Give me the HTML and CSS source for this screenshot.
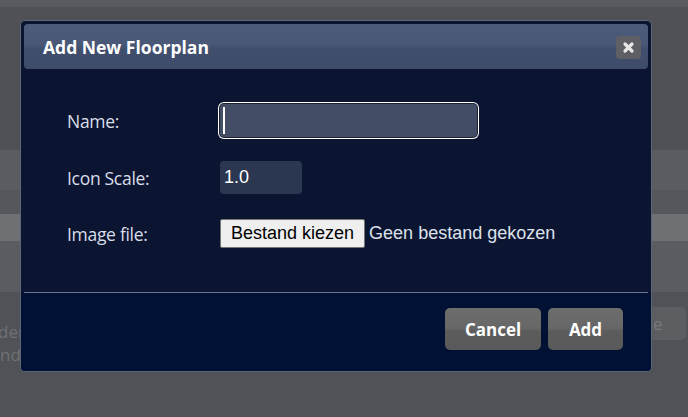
FILE: index.html
```html
<!DOCTYPE html>
<html>
<head>
<meta charset="utf-8">
<link rel="stylesheet" href="styles.css">
</head>
<body>
<div class="page">
  <div class="topbar"></div>
  <div class="band b1"></div>
  <div class="band b2"></div>
  <div class="band b3"></div>
  <div class="band b4"></div>
  <div class="band b5"></div>
  <div class="band b6"></div>
  <div class="bgfoot">
    <div class="bgtext"><span>den</span><span>nd</span></div>
    <div class="bgbtn">e</div>
  </div>
</div>

<div class="dialog">
  <div class="titlebar">
    <span class="title">Add New Floorplan</span>
    <button class="close" type="button">
      <svg width="13" height="13" viewBox="0 0 13 13"><path d="M3 3L10 10M10 3L3 10" stroke="#e6e6e6" stroke-width="3.2" stroke-linecap="round"/></svg>
    </button>
  </div>
  <div class="content">
    <label class="lbl">Name:</label>
    <div class="namefield">
      <input class="inp name" type="text">
      <span class="caret"></span>
    </div>
    <label class="lbl">Icon Scale:</label>
    <div><input class="inp scale" type="text" value="1.0"></div>
    <label class="lbl">Image file:</label>
    <div class="filefield">
      <span class="filebtn">Bestand kiezen</span>
      <span class="filename">Geen bestand gekozen</span>
    </div>
  </div>
  <div class="sep"></div>
  <div class="footer">
    <button class="btn" type="button">Cancel</button>
    <button class="btn" type="button">Add</button>
  </div>
</div>
</body>
</html>
```

FILE: styles.css
```css
html, body {
  margin: 0;
  padding: 0;
  background: #4f5156;
  overflow: hidden;
}
.page {
  width: 688px;
  height: 417px;
  display: flex;
  flex-direction: column;
  background: #4f5156;
}
.topbar { height: 7px; background: #595b60; }
.band { flex: none; }
.b1 { height: 143px; background: #4f5156; }
.b2 { height: 40px; background: #5a5c61; }
.b3 { height: 24px; background: #55575c; }
.b4 { height: 27px; background: #6e7073; }
.b5 { height: 51px; background: #5a5c61; }
.b6 { height: 20px; background: #505257; }
.bgfoot {
  display: flex;
  justify-content: space-between;
  align-items: flex-start;
  background: #505257;
  flex: 1;
}
.bgtext {
  display: flex;
  flex-direction: column;
  margin-top: 8px;
  font-family: "Open Sans", sans-serif;
  font-size: 17px;
  line-height: 23px;
  color: #6f7175;
  width: 20px;
  overflow: hidden;
}
.bgtext span:first-child { margin-left: -2px; }
.bgbtn {
  margin-top: -5px;
  margin-right: 2px;
  width: 56px;
  height: 33px;
  border-radius: 5px;
  background: #5b5d61;
  color: #76787b;
  font-family: "Open Sans", sans-serif;
  font-size: 17px;
  line-height: 33px;
  padding-left: 23px;
  box-sizing: border-box;
}

.dialog {
  position: absolute;
  left: 20px;
  top: 20px;
  width: 632px;
  height: 352px;
  box-sizing: border-box;
  border: 1px solid #5e6679;
  border-radius: 5px;
  background: #0b1532;
  display: flex;
  flex-direction: column;
  overflow: hidden;
  font-family: "Open Sans", sans-serif;
}
.titlebar {
  margin: 3px 3px 0;
  height: 45px;
  border-radius: 4px;
  background: linear-gradient(180deg, #4d5b7b 0%, #4a5878 45%, #414f6e 55%, #3e4b69 100%);
  display: flex;
  align-items: center;
  justify-content: space-between;
  padding: 0 7px 0 19px;
  box-sizing: border-box;
}
.title {
  color: #ffffff;
  font-weight: 700;
  font-size: 17.5px;
}
.close {
  width: 25px;
  height: 23px;
  border: none;
  border-radius: 4px;
  background: #5e5f64;
  padding: 0;
  display: flex;
  align-items: center;
  justify-content: center;
  margin-top: 2px;
}
.content {
  display: grid;
  grid-template-columns: 153px auto;
  grid-template-rows: 33px 33px 31px;
  row-gap: 24px;
  align-items: center;
  padding: 35px 0 0 46px;
  height: 223px;
  box-sizing: border-box;
}
.lbl {
  color: #d9dee8;
  font-size: 17.5px;
  letter-spacing: -0.3px;
}
.inp {
  display: block;
  box-sizing: border-box;
  height: 33px;
  border: none;
  border-radius: 4px;
  color: #ffffff;
  font-family: "Liberation Sans", Arial, sans-serif;
  font-size: 18px;
  padding: 0 4px;
  outline: none;
}
.namefield {
  position: relative;
  width: 257px;
}
.name {
  width: 257px;
  background: #434e66;
  box-shadow: 0 0 0 1px #1c2130, 0 0 0 2px #ffffff;
}
.caret {
  position: absolute;
  left: 3px;
  top: 3px;
  width: 2px;
  height: 27px;
  background: #ffffff;
}
.scale {
  width: 82px;
  background: #2b3650;
}
.filefield {
  display: flex;
  align-items: center;
  gap: 4px;
  font-family: "Liberation Sans", Arial, sans-serif;
  font-size: 18px;
}
.filebtn {
  box-sizing: border-box;
  height: 29px;
  padding: 0 10px;
  border: 1px solid #767676;
  border-radius: 2px;
  background: #efefef;
  color: #000;
  line-height: 27px;
}
.filename { color: #dde2ea; }
.sep {
  height: 1px;
  margin: 0 3px;
  background: #6a7590;
}
.footer {
  flex: 1;
  background: #001133;
  display: flex;
  justify-content: flex-end;
  align-items: flex-start;
  gap: 7px;
  padding: 15px 28px 0 0;
}
.btn {
  height: 42px;
  border: none;
  border-radius: 5px;
  background: linear-gradient(180deg, #6d6d6d 0%, #676767 48%, #5c5c5c 55%, #595959 100%);
  color: #ffffff;
  font-family: "Open Sans", sans-serif;
  font-weight: 700;
  font-size: 17px;
  padding: 0;
}
.btn:first-child { width: 96px; }
.btn:last-child { width: 75px; }
```
